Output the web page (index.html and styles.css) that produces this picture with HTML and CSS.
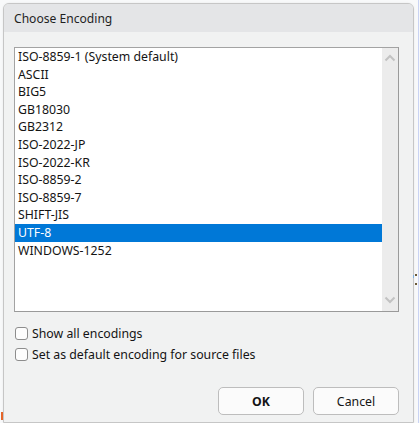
FILE: index.html
```html
<!DOCTYPE html>
<html>
<head>
<meta charset="utf-8">
<link rel="stylesheet" href="styles.css">
</head>
<body>
<div class="backdrop">
  <div class="dialog">
    <div class="titlebar">Choose Encoding</div>
    <div class="content">
      <div class="listbox">
        <ul class="items">
          <li>ISO-8859-1 (System default)</li>
          <li>ASCII</li>
          <li>BIG5</li>
          <li>GB18030</li>
          <li>GB2312</li>
          <li>ISO-2022-JP</li>
          <li>ISO-2022-KR</li>
          <li>ISO-8859-2</li>
          <li>ISO-8859-7</li>
          <li>SHIFT-JIS</li>
          <li class="selected">UTF-8</li>
          <li>WINDOWS-1252</li>
        </ul>
        <div class="scrollbar">
          <svg class="chev" width="12" height="8" viewBox="0 0 12 8"><polyline points="1.5,6.5 6,2 10.5,6.5" fill="none" stroke="#c2c2c2" stroke-width="2"/></svg>
          <svg class="chev" width="12" height="8" viewBox="0 0 12 8"><polyline points="1.5,1.5 6,6 10.5,1.5" fill="none" stroke="#c2c2c2" stroke-width="2"/></svg>
        </div>
      </div>
      <label class="check"><span class="box"></span>Show all encodings</label>
      <label class="check second"><span class="box"></span>Set as default encoding for source files</label>
      <div class="buttons">
        <button class="btn primary">OK</button>
        <button class="btn">Cancel</button>
      </div>
    </div>
  </div>
  <span class="edge-line"></span>
  <span class="speck s1"></span>
  <span class="speck s2"></span>
  <span class="speck s3"></span>
  <span class="orange"></span>
</div>
</body>
</html>
```

FILE: styles.css
```css
html, body {
  margin: 0;
  padding: 0;
  background: #f8f9fa;
  font-family: "Noto Sans", "Open Sans", sans-serif;
  color: #141414;
  overflow: hidden;
}
.backdrop {
  position: relative;
  width: 420px;
  height: 423px;
  padding: 3px 0 0 3px;
  box-sizing: border-box;
}
.dialog {
  width: 411px;
  height: 420px;
  box-sizing: border-box;
  border: 1px solid #c6c6c6;
  border-radius: 6px 6px 0 0;
  background: #f1f2f2;
  display: flex;
  flex-direction: column;
  overflow: hidden;
  box-shadow: 0 0 2px rgba(0,0,0,0.08);
}
.titlebar {
  height: 28px;
  flex: none;
  background: #e4e5e7;
  font-size: 12.1px;
  line-height: 29px;
  padding-left: 10px;
  color: #1f1f1f;
}
.content {
  flex: 1;
  padding: 15px 14px 0 10px;
  display: flex;
  flex-direction: column;
}
.listbox {
  height: 265px;
  box-sizing: border-box;
  border: 1px solid #a3a3a3;
  border-right-color: #9a9a9a;
  border-bottom-color: #9a9a9a;
  background: #fff;
  display: flex;
}
.items {
  list-style: none;
  margin: 0;
  padding: 0;
  flex: 1;
  font-size: 12.3px;
}
.items li {
  height: 17.6px;
  line-height: 17px;
  padding-left: 3px;
  white-space: nowrap;
}
.items li.selected {
  background: #0078d7;
  color: #fff;
}
.scrollbar {
  width: 16px;
  flex: none;
  background: #ececec;
  display: flex;
  flex-direction: column;
  justify-content: space-between;
  align-items: center;
  padding: 6px 0 7px;
  box-sizing: border-box;
}
.chev { display: block; }
.check {
  display: flex;
  align-items: center;
  font-size: 12.3px;
  margin-top: 14px;
  height: 14px;
  padding-left: 1px;
}
.check.second { margin-top: 7px; }
.box {
  width: 13px;
  height: 13px;
  box-sizing: border-box;
  border: 1px solid #8d8d8d;
  border-radius: 3px;
  background: #fdfdfd;
  margin-right: 4px;
  flex: none;
}
.buttons {
  display: flex;
  justify-content: flex-end;
  gap: 9px;
  margin-top: 26px;
}
.btn {
  width: 86px;
  height: 28px;
  box-sizing: border-box;
  border: 1px solid #bdbdbd;
  border-radius: 5px;
  background: #fbfbfb;
  font-family: "Noto Sans", "Open Sans", sans-serif;
  font-size: 12.3px;
  color: #141414;
  padding: 0;
}
.btn.primary { font-weight: bold; }
.edge-line {
  position: absolute;
  left: 418px;
  top: 0;
  width: 1px;
  height: 423px;
  background: #c9d3f3;
}
.speck {
  position: absolute;
  width: 2px;
  height: 2px;
  background: #6b5a3a;
}
.s1 { left: 415px; top: 274px; }
.s2 { left: 415px; top: 283px; }
.s3 { left: 413px; top: 275px; width: 1px; height: 3px; background: #7fb0e0; }
.orange {
  position: absolute;
  left: 1px;
  top: 412px;
  width: 2px;
  height: 8px;
  background: #e5652a;
}
```
